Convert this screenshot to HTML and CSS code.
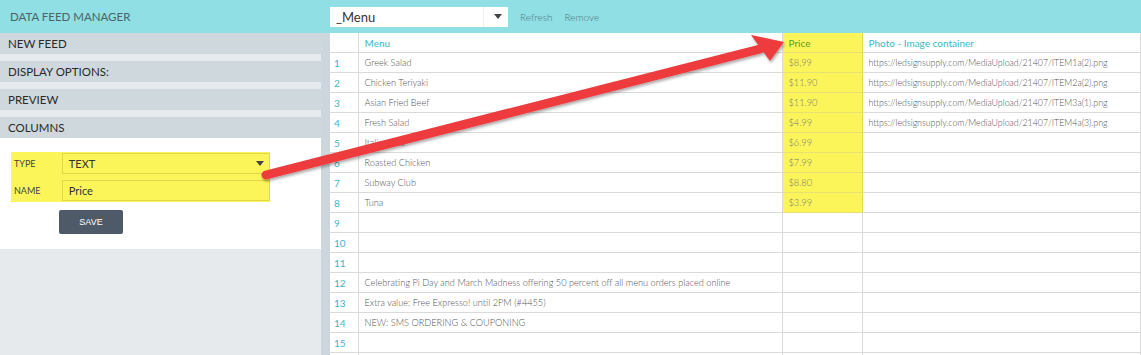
FILE: index.html
```html
<!DOCTYPE html>
<html lang="en">
<head>
    <meta charset="UTF-8">
    <title>Data Feed Manager</title>
    <link rel="stylesheet" href="styles.css">
</head>
<body>
    <div class="topbar">
        <div class="brand">DATA FEED MANAGER</div>
        <div class="feed-select">
            <span>_Menu</span>
            <span class="caret"></span>
        </div>
        <a class="toplink">Refresh</a>
        <a class="toplink">Remove</a>
    </div>

    <div class="workspace">
        <div class="sidebar">
            <div class="sections">
                <div class="section">NEW FEED</div>
                <div class="section">DISPLAY OPTIONS:</div>
                <div class="section">PREVIEW</div>
                <div class="section">COLUMNS</div>
            </div>
            <div class="panel">
                <div class="highlight">
                    <div class="field">
                        <label>TYPE</label>
                        <div class="input">TEXT<span class="caret"></span></div>
                    </div>
                    <div class="field">
                        <label>NAME</label>
                        <div class="input">Price</div>
                    </div>
                </div>
                <button class="save">SAVE</button>
            </div>
        </div>
        <div class="divider"></div>
        <div class="sheet">
            <table>
                <colgroup>
                    <col class="c-idx"><col class="c-menu"><col class="c-price"><col>
                </colgroup>
                <tr class="head">
                    <td></td><td>Menu</td><td class="hl price-head">Price</td><td>Photo - Image container</td>
                </tr>
                <tr><td class="idx">1</td><td>Greek Salad</td><td class="hl">$8,99</td><td class="url">https://ledsignsupply.com/MediaUpload/21407/ITEM1a(2).png</td></tr>
                <tr><td class="idx">2</td><td>Chicken Teriyaki</td><td class="hl">$11.90</td><td class="url">https://ledsignsupply.com/MediaUpload/21407/ITEM2a(2).png</td></tr>
                <tr><td class="idx">3</td><td>Asian Fried Beef</td><td class="hl">$11.90</td><td class="url">https://ledsignsupply.com/MediaUpload/21407/ITEM3a(1).png</td></tr>
                <tr><td class="idx">4</td><td>Fresh Salad</td><td class="hl">$4.99</td><td class="url">https://ledsignsupply.com/MediaUpload/21407/ITEM4a(3).png</td></tr>
                <tr><td class="idx">5</td><td>Italian Sub</td><td class="hl">$6.99</td><td></td></tr>
                <tr><td class="idx">6</td><td>Roasted Chicken</td><td class="hl">$7.99</td><td></td></tr>
                <tr><td class="idx">7</td><td>Subway Club</td><td class="hl">$8.80</td><td></td></tr>
                <tr><td class="idx">8</td><td>Tuna</td><td class="hl hl-last">$3.99</td><td></td></tr>
                <tr><td class="idx">9</td><td></td><td></td><td></td></tr>
                <tr><td class="idx">10</td><td></td><td></td><td></td></tr>
                <tr><td class="idx">11</td><td></td><td></td><td></td></tr>
                <tr><td class="idx">12</td><td class="wide">Celebrating Pi Day and March Madness offering 50 percent off all menu orders placed online</td><td></td><td></td></tr>
                <tr><td class="idx">13</td><td>Extra value: Free Expresso! until 2PM (#4455)</td><td></td><td></td></tr>
                <tr><td class="idx">14</td><td>NEW: SMS ORDERING &amp; COUPONING</td><td></td><td></td></tr>
                <tr><td class="idx">15</td><td></td><td></td><td></td></tr>
                <tr><td></td><td></td><td></td><td></td></tr>
            </table>
        </div>
    </div>

    <!-- annotation arrow drawn over the page -->
    <svg class="arrow" width="1141" height="355" viewBox="0 0 1141 355">
        <defs>
            <filter id="shadow" x="-10%" y="-50%" width="120%" height="200%">
                <feDropShadow dx="1" dy="2" stdDeviation="1.5" flood-color="#000" flood-opacity="0.35"/>
            </filter>
        </defs>
        <g filter="url(#shadow)">
            <line x1="266" y1="175" x2="760" y2="49" stroke="#ee3b3e" stroke-width="9" stroke-linecap="round"/>
            <polygon points="784,42 751,35 770,61" fill="#ee3b3e"/>
        </g>
    </svg>
</body>
</html>
```

FILE: styles.css
```css
body {
    margin: 0;
    font-family: Lato, "Open Sans", sans-serif;
    background: #e6eaec;
    width: 1141px;
    height: 355px;
    overflow: hidden;
    position: relative;
}
.topbar {
    display: flex;
    align-items: center;
    height: 33px;
    background: #8fdfe4;
}
.brand {
    width: 320px;
    padding-left: 10px;
    box-sizing: border-box;
    font-size: 11.5px;
    color: #4c6468;
}
.feed-select {
    display: flex;
    align-items: center;
    justify-content: space-between;
    margin-left: 10px;
    width: 178px;
    height: 20px;
    padding: 0 6px 0 6px;
    box-sizing: border-box;
    background: #fff;
    font-size: 13px;
    color: #333;
}
.feed-select .caret {
    border-left: 1px solid #eee;
    padding-left: 10px;
    height: 20px;
}
.caret {
    display: flex;
    align-items: center;
}
.caret::after {
    content: "";
    border-left: 4px solid transparent;
    border-right: 4px solid transparent;
    border-top: 5px solid #444;
}
.toplink {
    margin-left: 12px;
    font-size: 10px;
    color: #4f7a82;
    font-weight: 300;
}
.workspace {
    display: flex;
    height: 322px;
}
.sidebar {
    width: 321px;
}
.sections {
    display: flex;
    flex-direction: column;
    gap: 7px;
}
.section {
    height: 21px;
    line-height: 22px;
    padding-left: 8px;
    background: #cfd8dd;
    font-size: 11.5px;
    color: #2a2a2a;
}
.panel {
    background: #fff;
    height: 111px;
    padding: 14px 0 0 11px;
    box-sizing: border-box;
}
.highlight {
    width: 259px;
    height: 50px;
    background: #fcf55a;
    padding: 1px 0;
    box-sizing: border-box;
    display: flex;
    flex-direction: column;
    gap: 6px;
}
.field {
    display: flex;
    align-items: center;
}
.field label {
    width: 48px;
    padding-left: 3px;
    font-size: 9px;
    color: #444;
}
.input {
    display: flex;
    justify-content: space-between;
    align-items: center;
    width: 209px;
    height: 21px;
    padding: 0 5px 0 6px;
    box-sizing: border-box;
    border: 1px solid #e0d84a;
    font-size: 11px;
    color: #333;
}
.save {
    display: block;
    margin: 8px 0 0 48px;
    width: 64px;
    height: 24px;
    border: none;
    border-radius: 2px;
    background: #4f5a68;
    color: #fff;
    font-family: "Liberation Sans Narrow", "Liberation Sans", sans-serif;
    font-size: 9px;
}
.divider {
    width: 9px;
    background: #cdd6dc;
}
.sheet {
    flex: 1;
    background: #fff;
    overflow: hidden;
}
table {
    border-collapse: collapse;
    table-layout: fixed;
    width: 100%;
}
.c-idx { width: 28px; }
.c-menu { width: 424px; }
.c-price { width: 80px; }
td {
    height: 19px;
    padding: 0 6px;
    border: 1px solid #dadada;
    border-top: none;
    font-size: 9.2px;
    font-weight: 300;
    color: #555;
    white-space: nowrap;
    overflow: hidden;
}
td:first-child { border-left: none; }
td.url { font-size: 8.8px; }
tr.head td {
    font-size: 10px;
    font-weight: 400;
    color: #3cb7c7;
}
td.idx {
    padding-left: 4px;
    font-size: 10px;
    font-weight: 400;
    color: #3cb7c7;
}
td.wide { overflow: visible; }
td.hl {
    background: #fcf55a;
    border-left-color: #e4dc48;
    border-right-color: #e4dc48;
    border-bottom-color: #e8e070;
    color: #777;
}
td.hl-last { box-shadow: 0 4px 0 #fcf55a; }
tr.head td.price-head { color: #5c9d26; }
.arrow {
    position: absolute;
    left: 0;
    top: 0;
    pointer-events: none;
}
```
